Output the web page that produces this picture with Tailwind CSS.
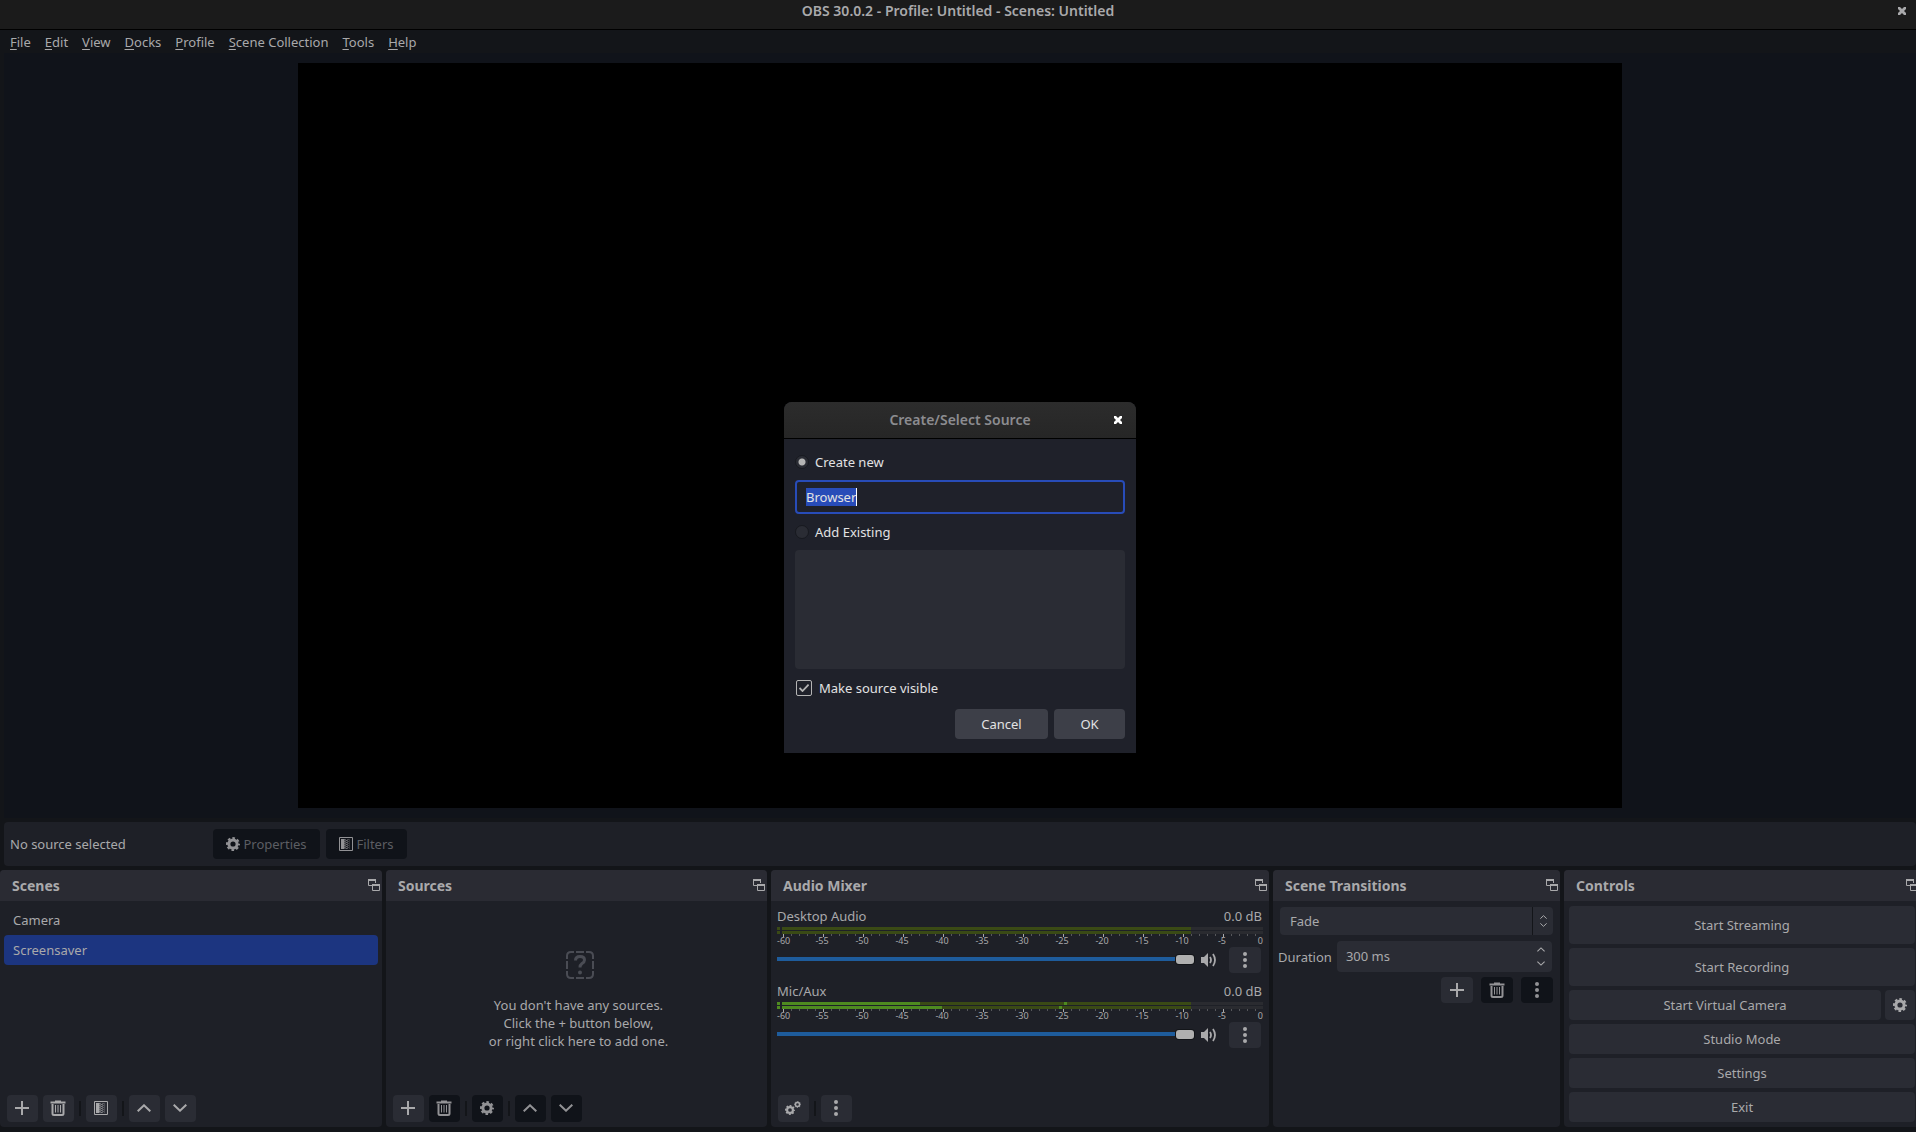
<!DOCTYPE html>
<html lang="en">
<head>
  <meta charset="UTF-8">
  <meta name="viewport" content="width=device-width, initial-scale=1.0">
  <title>OBS 30.0.2 - Profile: Untitled - Scenes: Untitled</title>
  <script src="https://cdn.jsdelivr.net/npm/@tailwindcss/browser@4"></script>
</head>
<body class="h-screen flex flex-col overflow-hidden bg-[#131519] font-['Noto_Sans',sans-serif] text-[13px] leading-[18px] text-[#a9a9ab]">

  <!-- Shared icons -->
  <svg class="hidden">
    <symbol id="plus" viewBox="0 0 14 14"><path d="M7 0v14M0 7h14" stroke="currentColor" stroke-width="2"/></symbol>
    <symbol id="trash" viewBox="0 0 16 16">
      <path d="M5 .5h6v1h4.500v2h-15v-2H5z" fill="currentColor"/>
      <path d="M2.500 4v9.500q0 1.500 1.500 1.500h8q1.500 0 1.500-1.500V4" fill="none" stroke="currentColor" stroke-width="2"/>
      <path d="M5.500 5v7.500M8 5v7.500M10.500 5v7.500" stroke="currentColor"/>
    </symbol>
    <symbol id="filter" viewBox="0 0 14 14">
      <path d="M.5.5h13v13H.5z" fill="none" stroke="currentColor"/>
      <path d="M2 2h3.500v10H2z" fill="currentColor"/>
      <path d="M6 2v10M8 3v10" stroke="currentColor" stroke-dasharray="1 1"/>
      <path d="M7 3v9M9 2v10" stroke="currentColor" stroke-dasharray="1 1" opacity=".8"/>
      <path d="M10.500 2v10" stroke="currentColor" opacity=".25"/>
    </symbol>
    <symbol id="gear" viewBox="0 0 14 14">
      <circle cx="7" cy="7" r="4.100" fill="none" stroke="currentColor" stroke-width="3"/>
      <circle cx="7" cy="7" r="6" fill="none" stroke="currentColor" stroke-width="2" stroke-dasharray="2.612 2.100" stroke-dashoffset="1.300"/>
    </symbol>
    <symbol id="up" viewBox="0 0 14 8"><path d="M.7 7.300 7 1.300l6.300 6" fill="none" stroke="currentColor" stroke-width="2"/></symbol>
    <symbol id="down" viewBox="0 0 14 8"><path d="M.7.7 7 6.700l6.300-6" fill="none" stroke="currentColor" stroke-width="2"/></symbol>
    <symbol id="dots" viewBox="0 0 4 16"><circle cx="2" cy="2" r="2" fill="currentColor"/><circle cx="2" cy="8" r="2" fill="currentColor"/><circle cx="2" cy="14" r="2" fill="currentColor"/></symbol>
    <symbol id="float" viewBox="0 0 12 12">
      <path d="M4 6.500H.5v-6h7V4" fill="none" stroke="currentColor"/><path d="M0 0h8v2H0zM4 5h8v2H4z" fill="currentColor"/>
      <path d="M4.500 5.500h7v6h-7z" fill="none" stroke="currentColor"/>
    </symbol>
    <symbol id="close" viewBox="0 0 8 8"><path d="M0 0h2l2 2 2-2h2v2L6 4l2 2v2H6L4 6 2 8H0V6l2-2-2-2z" fill="currentColor"/></symbol>
    <symbol id="speaker" viewBox="0 0 16 14">
      <path d="M0 4h3l4-4v14l-4-4H0z" fill="currentColor"/>
      <path d="M9 4q2 3 0 6M12 1q4 6 0 12" fill="none" stroke="currentColor" stroke-width="1.800"/>
    </symbol>
    <symbol id="scale" viewBox="0 0 486 3">
      <g fill="none" stroke="currentColor" shape-rendering="crispEdges">
        <path d="M5.500 1h481" stroke-width="2" stroke-dasharray="1 7" opacity=".4"/>
        <path d="M5.500 1.500h481" stroke-width="3" stroke-dasharray="1 39"/>
      </g>
    </symbol>
  </svg>

  <!-- Title bar -->
  <header class="relative h-[30px] shrink-0 border-b border-black bg-[#1b1b1b]">
    <h1 class="h-[22px] text-center text-[14px] leading-[22px] font-semibold">OBS 30.0.2 - Profile: Untitled - Scenes: Untitled</h1>
    <button aria-label="Close" class="absolute top-[7px] right-2.5"><svg class="size-2"><use href="#close"/></svg></button>
  </header>

  <!-- Menu bar -->
  <nav class="flex h-[23px] shrink-0 items-center gap-3.5 pl-2.5">
    <button><u class="underline-offset-2">F</u>ile</button>
    <button><u class="underline-offset-2">E</u>dit</button>
    <button><u class="underline-offset-2">V</u>iew</button>
    <button><u class="underline-offset-2">D</u>ocks</button>
    <button><u class="underline-offset-2">P</u>rofile</button>
    <button><u class="underline-offset-2">S</u>cene Collection</button>
    <button><u class="underline-offset-2">T</u>ools</button>
    <button><u class="underline-offset-2">H</u>elp</button>
  </nav>

  <!-- Preview -->
  <main class="relative ml-1 flex min-h-0 flex-1 justify-center bg-[#10131a] py-2.5">
    <div class="aspect-video h-full bg-black"></div>

    <!-- Create/Select Source dialog -->
    <form role="dialog" aria-labelledby="dialog-title" class="absolute top-[349px] left-1/2 w-[352px] -translate-x-1/2 rounded-t-lg bg-[#1f212a] text-[#e2e2e3]">
      <div class="relative rounded-t-lg border-b border-black bg-linear-to-b from-[#2c2c2c] to-[#262626]">
        <h2 id="dialog-title" class="text-center text-[14px] leading-9 font-semibold text-[#8c8c90]">Create/Select Source</h2>
        <button type="button" aria-label="Close dialog" class="absolute top-3.5 right-3.5 text-white"><svg class="size-2"><use href="#close"/></svg></button>
      </div>
      <div class="px-[11px] pt-3.5 pb-3.5">
        <label class="flex items-center gap-1.5">
          <input type="radio" name="mode" checked class="size-3.5 appearance-none rounded-full border border-[#17191f] bg-[#2a2c34] checked:bg-[radial-gradient(circle,#b4b4b4_3px,#2a2c34_4px)]">Create new
        </label>
        <div class="relative mt-[9px] mb-[9px]">
          <input id="source-name" type="text" aria-label="Source name" value="Browser" autofocus class="block h-[34px] w-full rounded-[4px] border-2 border-[#284cb8] bg-[#1f212a] px-[9px] leading-[18px] outline-none selection:bg-[#284cb8] selection:text-[#e2e2e3]">
          <span class="absolute top-2 left-[61px] h-[18px] w-px bg-white"></span>
        </div>
        <label class="flex items-center gap-1.5">
          <input type="radio" name="mode" class="size-3.5 appearance-none rounded-full border border-[#17191f] bg-[#2a2c34]">Add Existing
        </label>
        <div class="mt-[9px] h-[119px] rounded-[4px] bg-[#2a2c34]"></div>
        <label class="relative mt-2.5 flex items-center gap-[7px]">
          <input type="checkbox" checked class="peer ml-px size-4 appearance-none rounded-[2px] border border-[#b4b4b4]">
          <svg class="pointer-events-none absolute top-[5px] left-1 hidden h-2 w-2.5 text-[#b4b4b4] peer-checked:block" viewBox="0 0 10 8"><path d="m.5 4 3 3L9.600.6" fill="none" stroke="currentColor" stroke-width="1.800"/></svg>
          Make source visible
        </label>
        <div class="mt-3 flex justify-end gap-1.5">
          <button type="button" class="h-[30px] w-[93px] rounded-[4px] bg-[#3d3f48]">Cancel</button>
          <button type="button" class="h-[30px] w-[71px] rounded-[4px] bg-[#3d3f48]">OK</button>
        </div>
      </div>
    </form>
  </main>

  <!-- Source context bar -->
  <section class="mt-1 ml-1 flex h-11 shrink-0 items-center gap-1.5 rounded-[4px] bg-[#1e2027] pl-1.5">
    <span class="w-[197px]">No source selected</span>
    <button disabled class="flex h-[30px] w-[107px] items-center justify-center gap-[3px] rounded-[4px] bg-[#101319] text-[#5c5e63]"><svg class="size-3.5 text-[#929295]"><use href="#gear"/></svg>Properties</button>
    <button disabled class="flex h-[30px] w-[81px] items-center justify-center gap-[3px] rounded-[4px] bg-[#101319] text-[#5c5e63]"><svg class="size-3.5 text-[#929295]"><use href="#filter"/></svg>Filters</button>
  </section>

  <!-- Docks -->
  <div class="mt-1 mb-[5px] grid h-[257px] shrink-0 grid-cols-[382fr_381fr_498fr_287fr_352fr] gap-1">

    <section class="flex min-w-0 flex-col rounded-[4px] bg-[#1e2027]">
      <div class="flex h-[31px] items-center justify-between rounded-t-[4px] bg-[#2a2b33] pr-0.5 pl-3">
        <h2 class="text-[14px] font-bold">Scenes</h2>
        <button aria-label="Float Scenes"><svg class="mb-px size-3"><use href="#float"/></svg></button>
      </div>
      <ul class="flex-1 p-1">
        <li class="rounded-[4px] px-[9px] py-1.5">Camera</li>
        <li class="rounded-[4px] bg-[#1c3580] px-[9px] py-1.5">Screensaver</li>
      </ul>
      <div class="flex items-center gap-[5px] px-[7px] pb-[5px]">
        <button aria-label="Add scene" class="flex h-[27px] w-[31px] items-center justify-center rounded-[4px] bg-[#2a2c34] pr-px pb-px"><svg class="size-3.5"><use href="#plus"/></svg></button>
        <button aria-label="Remove scene" class="flex h-[27px] w-[31px] items-center justify-center rounded-[4px] bg-[#2a2c34] pr-px pb-px"><svg class="size-4"><use href="#trash"/></svg></button>
        <i class="h-[15px] w-0.5 bg-[#131519]"></i>
        <button aria-label="Scene filters" class="flex h-[27px] w-[31px] items-center justify-center rounded-[4px] bg-[#2a2c34] pr-px pb-px"><svg class="size-3.5"><use href="#filter"/></svg></button>
        <i class="h-[15px] w-0.5 bg-[#131519]"></i>
        <button aria-label="Move scene up" class="flex h-[27px] w-[31px] items-center justify-center rounded-[4px] bg-[#2a2c34] pr-px pb-px"><svg class="h-2 w-3.5"><use href="#up"/></svg></button>
        <button aria-label="Move scene down" class="flex h-[27px] w-[31px] items-center justify-center rounded-[4px] bg-[#2a2c34] pr-px pb-px"><svg class="h-2 w-3.5"><use href="#down"/></svg></button>
      </div>
    </section>

    <section class="flex min-w-0 flex-col rounded-[4px] bg-[#1e2027]">
      <div class="flex h-[31px] items-center justify-between rounded-t-[4px] bg-[#2a2b33] pr-0.5 pl-3">
        <h2 class="text-[14px] font-bold">Sources</h2>
        <button aria-label="Float Sources"><svg class="mb-px size-3"><use href="#float"/></svg></button>
      </div>
      <div class="flex flex-1 flex-col items-center pt-[50px] pl-1 text-center">
        <svg class="ml-0.5 size-7 text-[#4a4c54]" viewBox="0 0 28 28" fill="none" stroke="currentColor" stroke-width="2">
          <path d="M1 8V5q0-4 4-4h3M20 1h3q4 0 4 4v3M27 20v3q0 4-4 4h-3M8 27H5q-4 0-4-4v-3M10 1h8M10 27h8M1 10v8M27 10v8"/>
          <path d="M9.500 9.500q0-4 4.500-4t4.500 3.500q0 2-2.500 3.500-2 1.500-2 4" stroke-width="3"/>
          <circle cx="14" cy="21.500" r="2" fill="currentColor" stroke="none"/>
        </svg>
        <p class="mt-[17px]">You don't have any sources.<br>Click the + button below,<br>or right click here to add one.</p>
      </div>
      <div class="flex items-center gap-[5px] px-[7px] pb-[5px]">
        <button aria-label="Add source" class="flex h-[27px] w-[31px] items-center justify-center rounded-[4px] bg-[#2a2c34] pr-px pb-px"><svg class="size-3.5"><use href="#plus"/></svg></button>
        <button disabled aria-label="Remove source" class="flex h-[27px] w-[31px] items-center justify-center rounded-[4px] bg-[#101319] pr-px pb-px text-[#929295]"><svg class="size-4"><use href="#trash"/></svg></button>
        <i class="h-[15px] w-0.5 bg-[#131519]"></i>
        <button disabled aria-label="Source properties" class="flex h-[27px] w-[31px] items-center justify-center rounded-[4px] bg-[#101319] pr-px pb-px text-[#929295]"><svg class="size-3.5"><use href="#gear"/></svg></button>
        <i class="h-[15px] w-0.5 bg-[#131519]"></i>
        <button disabled aria-label="Move source up" class="flex h-[27px] w-[31px] items-center justify-center rounded-[4px] bg-[#101319] pr-px pb-px text-[#929295]"><svg class="h-2 w-3.5"><use href="#up"/></svg></button>
        <button disabled aria-label="Move source down" class="flex h-[27px] w-[31px] items-center justify-center rounded-[4px] bg-[#101319] pr-px pb-px text-[#929295]"><svg class="h-2 w-3.5"><use href="#down"/></svg></button>
      </div>
    </section>

    <section class="flex min-w-0 flex-col rounded-[4px] bg-[#1e2027]">
      <div class="flex h-[31px] items-center justify-between rounded-t-[4px] bg-[#2a2b33] pr-0.5 pl-3">
        <h2 class="text-[14px] font-bold">Audio Mixer</h2>
        <button aria-label="Float Audio Mixer"><svg class="mb-px size-3"><use href="#float"/></svg></button>
      </div>
      <div class="flex flex-1 flex-col gap-[9px] px-1.5 pt-1.5">
        <div>
          <div class="flex justify-between pr-px"><label for="desktop-volume">Desktop Audio</label><span>0.0 dB</span></div>
          <svg class="mt-0.5 h-[7px] w-full" viewBox="0 0 486 7" preserveAspectRatio="none" shape-rendering="crispEdges">
            <path d="M0 0h3v3H0zM0 4h3v3H0zM5 0h409v3H5zM5 4h409v3H5z" fill="#3a4a15"/>
            <path d="M414 0h72v3h-72zM414 4h72v3h-72z" fill="#2a2b30"/>
          </svg>
          <svg class="h-[3px] w-full"><use href="#scale"/></svg>
          <div class="-mt-0.5 flex text-center text-[9px] leading-3">
            <span class="flex-[25] text-left">-60</span><span class="flex-[40]">-55</span><span class="flex-[40]">-50</span><span class="flex-[40]">-45</span><span class="flex-[40]">-40</span><span class="flex-[40]">-35</span><span class="flex-[40]">-30</span><span class="flex-[40]">-25</span><span class="flex-[40]">-20</span><span class="flex-[40]">-15</span><span class="flex-[40]">-10</span><span class="flex-[40]">-5</span><span class="flex-[21] text-right">0</span>
          </div>
          <div class="flex h-[26px] items-center">
            <input id="desktop-volume" type="range" value="100" class="mr-[7px] mb-0.5 h-[9px] min-w-0 flex-1 appearance-none bg-[linear-gradient(#1e5c9c,#1e5c9c)] bg-[length:100%_4px] bg-center bg-no-repeat [&::-webkit-slider-thumb]:h-[9px] [&::-webkit-slider-thumb]:w-[18px] [&::-webkit-slider-thumb]:appearance-none [&::-webkit-slider-thumb]:rounded-[3px] [&::-webkit-slider-thumb]:bg-[#b0b0b0] [&::-webkit-slider-thumb]:shadow-[0_0_0_1px_#131519]">
            <button aria-label="Mute Desktop Audio"><svg class="h-3.5 w-4"><use href="#speaker"/></svg></button>
            <button aria-label="Desktop Audio options" class="mr-0.5 ml-3 flex h-[26px] w-8 items-center justify-center rounded-[4px] bg-[#2a2c34]"><svg class="h-4 w-1"><use href="#dots"/></svg></button>
          </div>
        </div>
        <div>
          <div class="flex justify-between pr-px"><label for="mic-volume">Mic/Aux</label><span>0.0 dB</span></div>
          <svg class="mt-0.5 h-[7px] w-full" viewBox="0 0 486 7" preserveAspectRatio="none" shape-rendering="crispEdges">
            <path d="M5 0h409v3H5zM5 4h409v3H5z" fill="#3a4a15"/>
            <path d="M414 0h72v3h-72zM414 4h72v3h-72z" fill="#2a2b30"/>
            <path d="M0 0h3v3H0zM0 4h3v3H0zM5 0h138v3H5zM5 4h160v3H5zM287 0h3v3h-3zM282 4h3v3h-3z" fill="#4e8a20"/>
          </svg>
          <svg class="h-[3px] w-full"><use href="#scale"/></svg>
          <div class="-mt-0.5 flex text-center text-[9px] leading-3">
            <span class="flex-[25] text-left">-60</span><span class="flex-[40]">-55</span><span class="flex-[40]">-50</span><span class="flex-[40]">-45</span><span class="flex-[40]">-40</span><span class="flex-[40]">-35</span><span class="flex-[40]">-30</span><span class="flex-[40]">-25</span><span class="flex-[40]">-20</span><span class="flex-[40]">-15</span><span class="flex-[40]">-10</span><span class="flex-[40]">-5</span><span class="flex-[21] text-right">0</span>
          </div>
          <div class="flex h-[26px] items-center">
            <input id="mic-volume" type="range" value="100" class="mr-[7px] mb-0.5 h-[9px] min-w-0 flex-1 appearance-none bg-[linear-gradient(#1e5c9c,#1e5c9c)] bg-[length:100%_4px] bg-center bg-no-repeat [&::-webkit-slider-thumb]:h-[9px] [&::-webkit-slider-thumb]:w-[18px] [&::-webkit-slider-thumb]:appearance-none [&::-webkit-slider-thumb]:rounded-[3px] [&::-webkit-slider-thumb]:bg-[#b0b0b0] [&::-webkit-slider-thumb]:shadow-[0_0_0_1px_#131519]">
            <button aria-label="Mute Mic/Aux"><svg class="h-3.5 w-4"><use href="#speaker"/></svg></button>
            <button aria-label="Mic/Aux options" class="mr-0.5 ml-3 flex h-[26px] w-8 items-center justify-center rounded-[4px] bg-[#2a2c34]"><svg class="h-4 w-1"><use href="#dots"/></svg></button>
          </div>
        </div>
      </div>
      <div class="flex items-center gap-[5px] px-[7px] pb-[5px]">
        <button aria-label="Advanced audio properties" class="flex h-[27px] w-[31px] items-center justify-center rounded-[4px] bg-[#2a2c34] pr-px pb-px">
          <svg class="h-3.5 w-4" viewBox="0 0 16 14"><use href="#gear" y="4" width="10" height="10"/><use href="#gear" x="9" width="7" height="7"/></svg>
        </button>
        <i class="h-[15px] w-0.5 bg-[#131519]"></i>
        <button aria-label="Mixer menu" class="flex h-[27px] w-[31px] items-center justify-center rounded-[4px] bg-[#2a2c34] pr-px pb-px"><svg class="h-4 w-1"><use href="#dots"/></svg></button>
      </div>
    </section>

    <section class="flex min-w-0 flex-col rounded-[4px] bg-[#1e2027]">
      <div class="flex h-[31px] items-center justify-between rounded-t-[4px] bg-[#2a2b33] pr-0.5 pl-3">
        <h2 class="text-[14px] font-bold">Scene Transitions</h2>
        <button aria-label="Float Scene Transitions"><svg class="mb-px size-3"><use href="#float"/></svg></button>
      </div>
      <div class="flex flex-col pt-1.5 pr-[7px] pl-[5px]">
        <div class="relative ml-0.5">
          <select aria-label="Transition" class="block h-7 w-full appearance-none rounded-[4px] bg-[#2a2c34] px-2.5"><option>Fade</option></select>
          <span class="pointer-events-none absolute inset-y-0 right-0 flex w-[21px] flex-col items-center justify-center gap-1 border-l border-[#131519]">
            <svg class="h-1 w-[7px]"><use href="#up"/></svg><svg class="h-1 w-[7px]"><use href="#down"/></svg>
          </span>
        </div>
        <div class="mt-1.5 flex items-center gap-[5px]">
          <label for="duration">Duration</label>
          <div class="relative mr-px min-w-0 flex-1">
            <input id="duration" type="text" value="300 ms" class="block h-[31px] w-full rounded-[4px] bg-[#2a2c34] px-[9px] pb-0.5 outline-none">
            <span class="absolute inset-y-0 right-[7px] flex flex-col justify-center gap-[9px]">
              <button aria-label="Increase duration"><svg class="block h-[5px] w-2"><use href="#up"/></svg></button>
              <button aria-label="Decrease duration"><svg class="block h-[5px] w-2"><use href="#down"/></svg></button>
            </span>
          </div>
        </div>
        <div class="mt-[5px] flex justify-end gap-2">
          <button aria-label="Add transition" class="flex h-[26px] w-8 items-center justify-center rounded-[4px] bg-[#2a2c34]"><svg class="size-3.5"><use href="#plus"/></svg></button>
          <button disabled aria-label="Remove transition" class="flex h-[26px] w-8 items-center justify-center rounded-[4px] bg-[#101319] text-[#929295]"><svg class="size-4"><use href="#trash"/></svg></button>
          <button disabled aria-label="Transition properties" class="flex h-[26px] w-8 items-center justify-center rounded-[4px] bg-[#101319] text-[#929295]"><svg class="h-4 w-1"><use href="#dots"/></svg></button>
        </div>
      </div>
    </section>

    <section class="flex min-w-0 flex-col overflow-hidden rounded-l-[4px] bg-[#1e2027]">
      <div class="flex h-[31px] items-center justify-between bg-[#2a2b33] pl-3">
        <h2 class="text-[14px] font-bold">Controls</h2>
        <button aria-label="Float Controls" class="-mr-0.5"><svg class="mb-px size-3"><use href="#float"/></svg></button>
      </div>
      <div class="flex flex-col gap-1 pt-[5px] pr-px pl-[5px]">
        <button class="h-[38px] rounded-[4px] bg-[#2a2c34]">Start Streaming</button>
        <button class="h-[38px] rounded-[4px] bg-[#2a2c34]">Start Recording</button>
        <div class="flex gap-1">
          <button class="h-[30px] flex-1 rounded-[4px] bg-[#2a2c34]">Start Virtual Camera</button>
          <button aria-label="Virtual camera settings" class="flex size-[30px] items-center justify-center rounded-[4px] bg-[#2a2c34]"><svg class="size-3.5"><use href="#gear"/></svg></button>
        </div>
        <button class="h-[30px] rounded-[4px] bg-[#2a2c34]">Studio Mode</button>
        <button class="h-[30px] rounded-[4px] bg-[#2a2c34]">Settings</button>
        <button class="h-[30px] rounded-[4px] bg-[#2a2c34]">Exit</button>
      </div>
    </section>
  </div>

  <script>
    // Focus the name field with its text selected, ready to be replaced
    document.getElementById('source-name').select();
  </script>
</body>
</html>
